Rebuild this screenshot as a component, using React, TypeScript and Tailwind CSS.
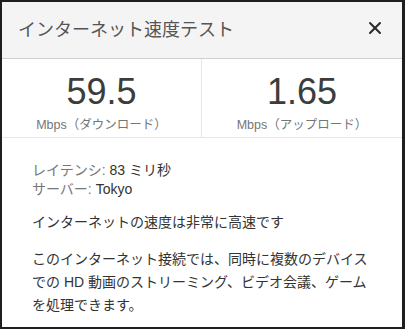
import { X } from "lucide-react";

const font = "font-['Liberation_Sans','Noto_Sans_CJK_JP',sans-serif]";

function Stat({ value, label }: { value: string; label: string }) {
  return (
    <div className="flex flex-col items-center pt-[15px]">
      <div className="text-[36px] leading-[36px] text-[#3c3c3c]">{value}</div>
      <div className="mt-[7px] text-[12.5px] leading-[16px] text-[#757575]">{label}</div>
    </div>
  );
}

export default function App() {
  return (
    <div className={`${font} h-[329px] w-[405px] border-t-2 border-l-2 border-b-2 border-r-[3px] border-[#1e1e1e] bg-white`}>
      {/* Header */}
      <div className="flex h-[57px] items-center justify-between border-b border-[#cfcfcf] bg-[#f4f4f4] pl-4 pr-[17px]">
        <h1 className="text-[18px] text-[#555] pt-[1px]">インターネット速度テスト</h1>
        <X className="h-[20px] w-[20px] text-[#2a2a2a] -mt-[4px]" strokeWidth={2.4} />
      </div>

      {/* Speeds */}
      <div className="grid h-[79px] grid-cols-2 border-b border-[#e6e6e6]">
        <div className="border-r border-[#e6e6e6]">
          <Stat value="59.5" label="Mbps（ダウンロード）" />
        </div>
        <Stat value="1.65" label="Mbps（アップロード）" />
      </div>

      {/* Details */}
      <div className="px-[30px] pt-[23px] text-[14px] text-[#333]">
        <div className="leading-[19px]">
          <p>
            <span className="text-[#777]">レイテンシ: </span>83 ミリ秒
          </p>
          <p>
            <span className="text-[#777]">サーバー: </span>Tokyo
          </p>
        </div>
        <p className="mt-[12px] leading-[23px]">インターネットの速度は非常に高速です</p>
        <p className="mt-[14px] leading-[23px]">
          このインターネット接続では、同時に複数のデバイスでの HD 動画のストリーミング、ビデオ会議、ゲームを処理できます。
        </p>
      </div>
    </div>
  );
}
